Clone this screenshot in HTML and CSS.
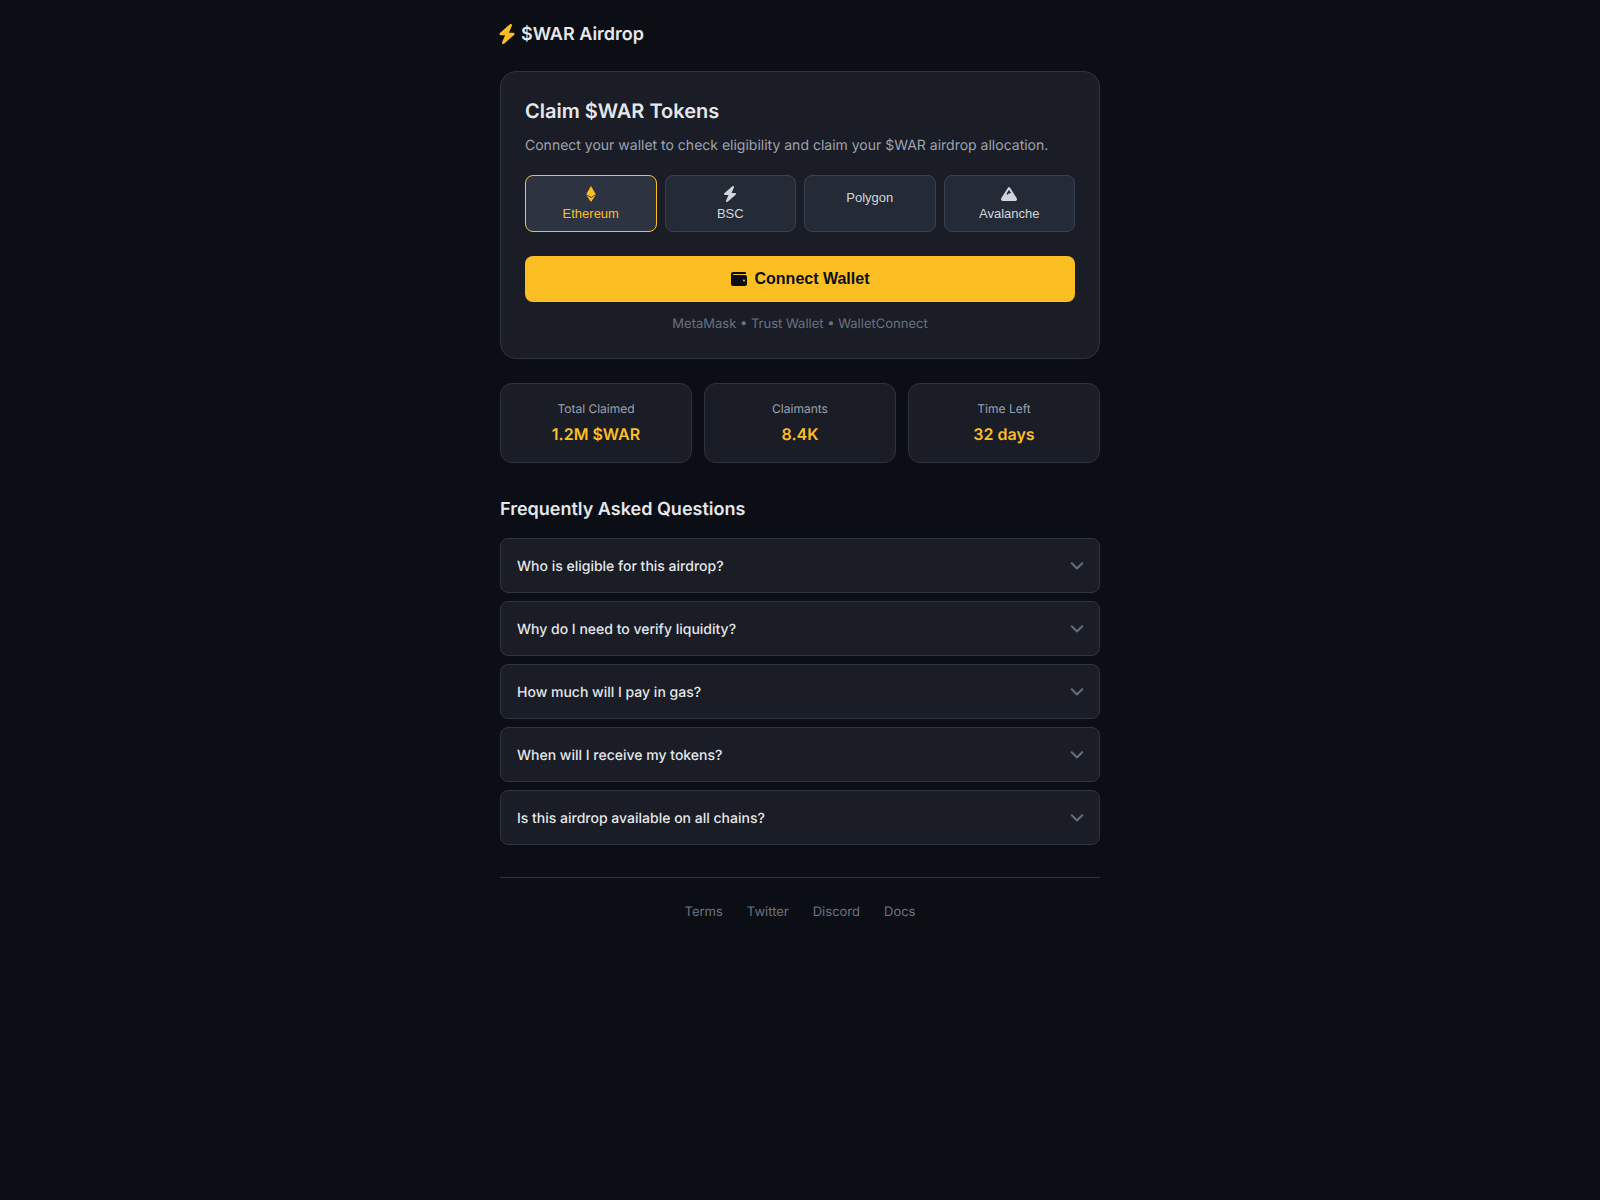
FILE: index.html
```html
<!DOCTYPE html>
<html lang="en">
<head>
    <meta charset="UTF-8">
    <meta name="viewport" content="width=device-width, initial-scale=1.0">
    <title>$WAR Airdrop</title>
    <link rel="stylesheet" href="styles.css">
</head>
<body>
    <div class="container">
        <header class="header">
            <svg class="header-icon" viewBox="0 0 448 512"><path d="M349.4 44.6c5.9-13.7 1.5-29.7-10.6-38.5s-28.6-8-39.9 1.8l-256 224c-10 8.8-13.6 22.9-8.9 35.3S50.7 288 64 288H175.5L98.6 467.4c-5.9 13.7-1.5 29.7 10.6 38.5s28.6 8 39.9-1.8l256-224c10-8.8 13.5-22.9 8.9-35.3s-16.6-20.7-30-20.7H272.5L349.4 44.6z"/></svg>
            <span class="header-text">$WAR Airdrop</span>
        </header>

        <section class="claim-card">
            <h2 class="claim-title">Claim $WAR Tokens</h2>
            <p class="claim-desc">Connect your wallet to check eligibility and claim your $WAR airdrop allocation.</p>

            <div class="chains">
                <button class="chain-btn active">
                    <svg class="chain-icon" viewBox="0 0 320 512"><path d="M311.9 260.8L160 353.6 8 260.8 160 0l151.9 260.8zM160 383.4L8 290.6 160 512l152-221.4-152 92.8z"/></svg>
                    <span class="chain-name">Ethereum</span>
                </button>
                <button class="chain-btn">
                    <svg class="chain-icon" viewBox="0 0 448 512"><path d="M349.4 44.6c5.9-13.7 1.5-29.7-10.6-38.5s-28.6-8-39.9 1.8l-256 224c-10 8.8-13.6 22.9-8.9 35.3S50.7 288 64 288H175.5L98.6 467.4c-5.9 13.7-1.5 29.7 10.6 38.5s28.6 8 39.9-1.8l256-224c10-8.8 13.5-22.9 8.9-35.3s-16.6-20.7-30-20.7H272.5L349.4 44.6z"/></svg>
                    <span class="chain-name">BSC</span>
                </button>
                <button class="chain-btn">
                    <span class="chain-name">Polygon</span>
                </button>
                <button class="chain-btn">
                    <svg class="chain-icon" viewBox="0 0 512 512"><path fill-rule="evenodd" d="M256 32c12.5 0 24.1 6.4 30.8 17L503.4 394.4c5.6 8.9 8.6 19.2 8.6 29.7c0 30.9-25 55.9-55.9 55.9H55.9C25 480 0 455 0 424.1c0-10.5 3-20.8 8.6-29.7L225.2 49c6.6-10.6 18.3-17 30.8-17zM256 120.4L176.9 246.5l18.3 24.4c6.4 8.5 19.2 8.5 25.6 0l25.6-34.1c6.4-8.5 19.2-8.5 25.6 0L321 224z"/></svg>
                    <span class="chain-name">Avalanche</span>
                </button>
            </div>

            <button class="connect-btn">
                <svg class="connect-icon" viewBox="0 0 512 512"><path d="M64 32C28.7 32 0 60.7 0 96V416c0 35.3 28.7 64 64 64H448c35.3 0 64-28.7 64-64V192c0-35.3-28.7-64-64-64H80c-8.8 0-16-7.2-16-16s7.2-16 16-16H448c17.7 0 32-14.3 32-32s-14.3-32-32-32H64zM416 272a32 32 0 1 1 0 64 32 32 0 1 1 0-64z"/></svg>
                <span>Connect Wallet</span>
            </button>

            <p class="wallets">MetaMask • Trust Wallet • WalletConnect</p>
        </section>

        <section class="stats">
            <div class="stat">
                <div class="stat-label">Total Claimed</div>
                <div class="stat-value">1.2M $WAR</div>
            </div>
            <div class="stat">
                <div class="stat-label">Claimants</div>
                <div class="stat-value">8.4K</div>
            </div>
            <div class="stat">
                <div class="stat-label">Time Left</div>
                <div class="stat-value">32 days</div>
            </div>
        </section>

        <section class="faq">
            <h3 class="faq-title">Frequently Asked Questions</h3>
            <div class="faq-item">
                <span class="faq-question">Who is eligible for this airdrop?</span>
                <svg class="chevron" viewBox="0 0 512 512"><path d="M233.4 406.6c12.5 12.5 32.8 12.5 45.3 0l192-192c12.5-12.5 12.5-32.8 0-45.3s-32.8-12.5-45.3 0L256 338.7 86.6 169.4c-12.5-12.5-32.8-12.5-45.3 0s-12.5 32.8 0 45.3l192 192z"/></svg>
            </div>
            <div class="faq-item">
                <span class="faq-question">Why do I need to verify liquidity?</span>
                <svg class="chevron" viewBox="0 0 512 512"><path d="M233.4 406.6c12.5 12.5 32.8 12.5 45.3 0l192-192c12.5-12.5 12.5-32.8 0-45.3s-32.8-12.5-45.3 0L256 338.7 86.6 169.4c-12.5-12.5-32.8-12.5-45.3 0s-12.5 32.8 0 45.3l192 192z"/></svg>
            </div>
            <div class="faq-item">
                <span class="faq-question">How much will I pay in gas?</span>
                <svg class="chevron" viewBox="0 0 512 512"><path d="M233.4 406.6c12.5 12.5 32.8 12.5 45.3 0l192-192c12.5-12.5 12.5-32.8 0-45.3s-32.8-12.5-45.3 0L256 338.7 86.6 169.4c-12.5-12.5-32.8-12.5-45.3 0s-12.5 32.8 0 45.3l192 192z"/></svg>
            </div>
            <div class="faq-item">
                <span class="faq-question">When will I receive my tokens?</span>
                <svg class="chevron" viewBox="0 0 512 512"><path d="M233.4 406.6c12.5 12.5 32.8 12.5 45.3 0l192-192c12.5-12.5 12.5-32.8 0-45.3s-32.8-12.5-45.3 0L256 338.7 86.6 169.4c-12.5-12.5-32.8-12.5-45.3 0s-12.5 32.8 0 45.3l192 192z"/></svg>
            </div>
            <div class="faq-item">
                <span class="faq-question">Is this airdrop available on all chains?</span>
                <svg class="chevron" viewBox="0 0 512 512"><path d="M233.4 406.6c12.5 12.5 32.8 12.5 45.3 0l192-192c12.5-12.5 12.5-32.8 0-45.3s-32.8-12.5-45.3 0L256 338.7 86.6 169.4c-12.5-12.5-32.8-12.5-45.3 0s-12.5 32.8 0 45.3l192 192z"/></svg>
            </div>
        </section>

        <footer class="footer">
            <a href="#">Terms</a>
            <a href="#">Twitter</a>
            <a href="#">Discord</a>
            <a href="#">Docs</a>
        </footer>
    </div>
</body>
</html>
```

FILE: styles.css
```css
* {
    margin: 0;
    padding: 0;
    box-sizing: border-box;
}

body {
    background-color: #0b0e15;
    color: #e5e7eb;
    font-family: 'Inter', 'Liberation Sans', sans-serif;
    line-height: 1.5;
    min-height: 100vh;
    text-rendering: geometricPrecision;
}

.container {
    width: 600px;
    margin: 0 auto;
    padding-top: 20px;
}

.header {
    display: flex;
    align-items: center;
    gap: 4px;
    height: 27px;
    margin-bottom: 24px;
    font-size: 18px;
    font-weight: 600;
}

.header-icon {
    width: 20px;
    height: 20px;
    margin-left: -3px;
    fill: #fbbf24;
}

.header-text {
    padding-top: 2px;
}

.claim-card {
    padding: 24px;
    background-color: #1a1d26;
    border: 1px solid #2d3340;
    border-radius: 16px;
    margin-bottom: 24px;
}

.claim-title {
    font-size: 20px;
    font-weight: 600;
    margin-bottom: 8px;
}

.claim-desc {
    padding-top: 1px;
    font-size: 14px;
    color: #9ca3af;
    margin-bottom: 19px;
}

.chains {
    display: grid;
    grid-template-columns: repeat(4, 1fr);
    gap: 8px;
    margin-bottom: 24px;
}

/* buttons keep the default form font, not Inter */
.chain-btn {
    display: flex;
    flex-direction: column;
    align-items: center;
    justify-content: flex-start;
    padding: 10px 8px;
    background-color: #252b36;
    border: 1px solid #374151;
    border-radius: 8px;
    color: #d1d5db;
    font-family: 'Liberation Sans', sans-serif;
    font-size: 13px;
}

.chain-btn.active {
    background-color: #2d3340;
    border-color: #fbbf24;
    color: #fbbf24;
}

.chain-icon {
    width: 16px;
    height: 16px;
    fill: currentColor;
}

.chain-name {
    display: block;
    margin-top: 4px;
    line-height: 15px;
}

.connect-btn {
    display: flex;
    align-items: center;
    justify-content: center;
    gap: 8px;
    width: 100%;
    height: 46px;
    background-color: #fbbf24;
    border: none;
    border-radius: 8px;
    color: #0b0e15;
    font-family: 'Liberation Sans', sans-serif;
    font-size: 16px;
    font-weight: 700;
}

.connect-icon {
    width: 16px;
    height: 16px;
    fill: currentColor;
}

.wallets {
    margin-top: 13px;
    margin-bottom: -1px;
    text-align: center;
    font-size: 13px;
    color: #6b7280;
}

.stats {
    display: grid;
    grid-template-columns: repeat(3, 1fr);
    gap: 12px;
    margin-bottom: 32px;
}

.stat {
    padding: 16px;
    text-align: center;
    background-color: #1a1d26;
    border: 1px solid #2d3340;
    border-radius: 12px;
}

.stat-label {
    font-size: 12px;
    color: #9ca3af;
    margin-bottom: 4px;
}

.stat-value {
    font-size: 16px;
    font-weight: 600;
    color: #fbbf24;
}

.faq-title {
    padding-top: 1px;
    font-size: 18px;
    font-weight: 600;
    margin-bottom: 15px;
}

.faq-item {
    display: flex;
    align-items: center;
    justify-content: space-between;
    height: 55px;
    padding: 0 16px;
    margin-bottom: 8px;
    background-color: #1a1d26;
    border: 1px solid #2d3340;
    border-radius: 8px;
    font-size: 14px;
    font-weight: 500;
}

.faq-question {
    padding-top: 2px;
}

.chevron {
    width: 14px;
    height: 14px;
    margin-right: -1px;
    fill: #6b7280;
    stroke: #6b7280;
    stroke-width: 14;
}

.footer {
    display: flex;
    justify-content: center;
    gap: 24px;
    margin-top: 32px;
    padding-top: 25px;
    border-top: 1px solid #2d3340;
    font-size: 13px;
}

.footer a {
    color: #6b7280;
    text-decoration: none;
}
```
